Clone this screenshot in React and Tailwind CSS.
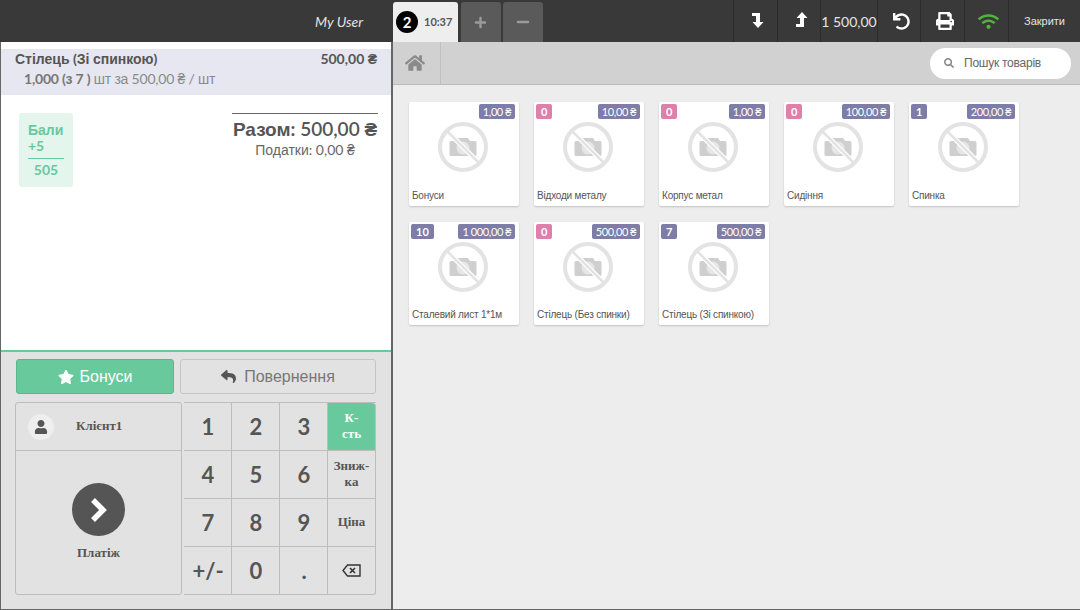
import { FaHome, FaUndo, FaPrint, FaWifi, FaStar, FaReply, FaUser, FaSearch, FaPlus, FaMinus } from "react-icons/fa";

const products = [
  { name: "Бонуси", price: "1,00 ₴" },
  { name: "Відходи металу", price: "10,00 ₴", qty: "0" },
  { name: "Корпус метал", price: "1,00 ₴", qty: "0" },
  { name: "Сидіння", price: "100,00 ₴", qty: "0" },
  { name: "Спинка", price: "200,00 ₴", qty: "1" },
  { name: "Сталевий лист 1*1м", price: "1 000,00 ₴", qty: "10" },
  { name: "Стілець (Без спинки)", price: "500,00 ₴", qty: "0" },
  { name: "Стілець (Зі спинкою)", price: "500,00 ₴", qty: "7" },
];

const keys = ["1", "2", "3", "К-\nсть", "4", "5", "6", "Зниж-\nка", "7", "8", "9", "Ціна", "+/-", "0", ".", "back"];

// Lato carries the digits and latin, cyrillic and the hryvnia sign come out in Arial metrics
function T({ children }) {
  return children.split(/([А-Яа-яЄєІіЇїҐґ₴]+)/).map((part, i) =>
    i % 2 ? <span key={i} className="font-['Liberation_Sans',sans-serif]">{part}</span> : part
  );
}

function NoPhoto() {
  return (
    <svg width="54" height="54" viewBox="0 0 54 54" className="block">
      <path d="M15 21h5l2-3h10l2 3h5a1.500 1.500 0 0 1 1.500 1.500v12a1.500 1.500 0 0 1-1.500 1.500H15a1.500 1.500 0 0 1-1.500-1.500v-12A1.500 1.500 0 0 1 15 21z" fill="#cfcfcf" />
      <circle cx="27" cy="28" r="6.500" fill="#e6e6e6" />
      <line x1="12" y1="12" x2="42" y2="42" stroke="#ffffff" strokeWidth="5" />
      <line x1="10" y1="10" x2="44" y2="44" stroke="#e3e3e3" strokeWidth="2.500" />
      <circle cx="27" cy="27" r="23" fill="none" stroke="#e3e3e3" strokeWidth="4" />
    </svg>
  );
}

function BackspaceIcon() {
  return (
    <svg width="19" height="13" viewBox="0 0 19 13" fill="none" stroke="#333" strokeWidth="1.4">
      <path d="M5.500 1H18v11H5.500L1 6.500z" />
      <path d="M8 4l5 5M13 4l-5 5" strokeWidth="1.600" />
    </svg>
  );
}

function LevelDown() {
  return (
    <svg width="12" height="15" viewBox="0 0 12 15" fill="currentColor">
      <path d="M0 0h8v9h3.500L6 15 .5 9H4V3H0z" />
    </svg>
  );
}

function LevelUp() {
  return (
    <svg width="12" height="15" viewBox="0 0 12 15" fill="currentColor">
      <path d="M0 15h8V6h3.500L6 0 .5 6H4v6H0z" />
    </svg>
  );
}

function PayChevron() {
  return (
    <svg width="18" height="26" viewBox="0 0 18 26" fill="none" stroke="currentColor" strokeWidth="5.500">
      <polyline points="3,3 13,13 3,23" />
    </svg>
  );
}

function ProductCard({ product, tall }) {
  const qtyColor = product.qty === "0" ? "bg-[#de7fac]" : "bg-[#7d7da8]";
  return (
    <div className={`relative w-[110px] ${tall ? "h-[104px]" : "h-[103px]"} bg-white shadow-[0_1px_2px_rgba(0,0,0,0.18)] rounded-[2px]`}>
      {product.qty && (
        <span className={`absolute left-[2px] top-[2px] h-[15px] min-w-[15px] px-[5px] rounded-[2px] text-[11px] leading-[15px] font-bold text-white text-center ${qtyColor}`}>
          {product.qty}
        </span>
      )}
      <span className="absolute right-[4px] top-[2px] h-[15px] px-[4px] rounded-[2px] bg-[#7d7da8] text-[11px] tracking-[-0.4px] leading-[15px] text-white whitespace-nowrap">
        <T>{product.price}</T>
      </span>
      <div className="flex justify-center pt-[18px] pr-[2px]">
        <NoPhoto />
      </div>
      <div className="absolute left-[3px] bottom-[3px] text-[10px] tracking-[-0.2px] leading-[14px] text-[#555] whitespace-nowrap font-['Liberation_Sans',sans-serif]">
        {product.name}
      </div>
    </div>
  );
}

function Key({ k, i }) {
  const isLast = i % 4 === 3;
  const active = i === 3;
  const base = `border-r border-b border-[#bdbdbd] flex items-center justify-center ${i === 15 ? "rounded-br-[3px]" : ""}`;
  if (k === "back") {
    return (
      <div className={`${base} bg-[#e2e2e2]`}>
        <BackspaceIcon />
      </div>
    );
  }
  if (isLast) {
    return (
      <div className={`${base} pb-[2px] text-center whitespace-pre-line font-['Liberation_Serif',serif] font-bold text-[13px] leading-[16px] ${active ? "bg-[#68c99c] text-white rounded-tr-[4px]" : "bg-[#e2e2e2] text-[#555]"}`}>
        {k}
      </div>
    );
  }
  return (
    <div className={`${base} pl-[1px] bg-[#e2e2e2] text-[#555] text-[22px] font-bold`}>
      {k}
    </div>
  );
}

export default function App() {
  return (
    <div className="w-[1080px] h-[610px] overflow-hidden flex flex-col font-['Lato',sans-serif] text-[#555] bg-[#666]">
      {/* Top bar */}
      <header className="h-[42px] bg-[#393939] flex shrink-0">
        <div className="w-[393px] flex items-center justify-end pr-[30px] text-[14px] italic text-[#e4e4e4]">My User</div>
        <div className="flex items-end gap-[3px] pt-[2px]">
          <div className="w-[65px] h-[40px] bg-[#eeeeee] rounded-t-[3px] flex items-center pl-[3px] gap-[6px]">
            <span className="w-[22px] h-[22px] rounded-full bg-black text-white text-[15px] font-bold flex items-center justify-center">2</span>
            <span className="text-[11px] font-bold text-[#555]">10:37</span>
          </div>
          <div className="w-[40px] h-[40px] bg-[#5a5a5a] rounded-t-[3px] flex items-center justify-center pr-[2px] text-[#9a9a9a] text-[13px]"><FaPlus /></div>
          <div className="w-[40px] h-[40px] bg-[#5a5a5a] rounded-t-[3px] flex items-center justify-center pr-[1px] text-[#9a9a9a] text-[14px] ml-[-1px]"><FaMinus /></div>
        </div>
        <div className="ml-auto flex h-[42px] text-white">
          <div className="w-[44px] border-l border-[#2b2b2b] flex items-center justify-center pl-[4px] pb-[1px]"><LevelDown /></div>
          <div className="w-[43px] border-l border-[#2b2b2b] flex items-center justify-center pl-[5px] pb-[3px]"><LevelUp /></div>
          <div className="w-[57px] border-l border-[#2b2b2b] flex items-center justify-center text-[14px] text-[#e4e4e4] whitespace-nowrap">1 500,00</div>
          <div className="w-[43px] border-l border-[#2b2b2b] flex items-center justify-center pl-[4px] text-[17px]"><FaUndo /></div>
          <div className="w-[44px] border-l border-[#2b2b2b] flex items-center justify-center pl-[5px] text-[18px]"><FaPrint /></div>
          <div className="w-[44px] border-l border-[#2b2b2b] flex items-center justify-center pl-[3px] text-[21px] text-[#4fb33f]"><FaWifi /></div>
          <div className="w-[72px] border-l border-[#2b2b2b] flex items-center justify-center text-[11px] text-[#e4e4e4] font-['Liberation_Sans',sans-serif]">Закрити</div>
        </div>
      </header>

      <div className="flex-1 flex min-h-0">
        {/* Left panel */}
        <aside className="w-[391px] border-l border-[#666] flex flex-col shrink-0">
          <div className="h-[310px] bg-white border-b-2 border-[#68c99c] pt-[7px]">
            <div className="h-[46px] bg-[#e6e7f0] px-[14px]">
              <div className="flex justify-between text-[14px] font-bold leading-[19px] text-[#555]">
                <span><T>Стілець (Зі спинкою)</T></span>
                <span><T>500,00 ₴</T></span>
              </div>
              <div className="pl-[9px] text-[14px] tracking-[-0.2px] leading-[19px] text-[#8a8a8a]">
                <span className="font-bold text-[#777]"><T>1,000 (з 7 )</T></span> <T>шт за 500,00 ₴ / шт</T>
              </div>
            </div>
            <div className="flex justify-between pl-[18px] pr-[13px] pt-[18px]">
              <div className="w-[54px] h-[74px] bg-[#e4f5ee] rounded-[3px] px-[9px] pt-[9px] text-[14px] leading-[16px] font-bold text-[#68c99c]">
                <div><T>Бали</T></div>
                <div>+5</div>
                <div className="border-t border-[#68c99c] mt-[4px] pt-[3px] text-center">505</div>
              </div>
              <div className="w-[146px] border-t border-[#666] text-center">
                <div className="text-[19px] leading-[26px] mt-[2px] text-[#555] whitespace-nowrap font-semibold"><span className="font-bold"><T>Разом:</T></span> <T>500,00 ₴</T></div>
                <div className="text-[14px] leading-[14px] text-[#666]"><T>Податки: 0,00 ₴</T></div>
              </div>
            </div>
          </div>

          <div className="flex-1 bg-[#e2e2e2] pl-[14px] pt-[7px]">
            <div className="flex gap-[6px] pl-[1px] font-['Liberation_Sans',sans-serif]">
              <div className="w-[158px] h-[35px] bg-[#68c99c] border border-[#5bb88d] rounded-[3px] flex items-center justify-center gap-[6px] text-white text-[16px]">
                <FaStar className="text-[16px]" /> Бонуси
              </div>
              <div className="w-[196px] h-[35px] border border-[#c4c4c4] rounded-[3px] flex items-center justify-center gap-[8px] text-[#777] text-[16px]">
                <FaReply className="text-[15px] text-[#555]" /> Повернення
              </div>
            </div>
            <div className="flex mt-[8px]">
              <div className="w-[167px] h-[193px] border border-[#bdbdbd] rounded-[3px] flex flex-col">
                <div className="h-[48px] border-b border-[#bdbdbd] flex items-center pl-[12px]">
                  <span className="w-[26px] h-[26px] rounded-full bg-[#eeeeee] flex items-center justify-center text-[14px] text-[#555]"><FaUser /></span>
                  <span className="ml-[22px] pb-[2px] font-['Liberation_Serif',serif] font-bold text-[13px] text-[#555]">Клієнт1</span>
                </div>
                <div className="flex-1 flex flex-col items-center pt-[32px]">
                  <span className="w-[53px] h-[53px] rounded-full bg-[#555] flex items-center justify-center text-white"><PayChevron /></span>
                  <span className="mt-[7px] font-['Liberation_Serif',serif] font-bold text-[13px] text-[#555]">Платіж</span>
                </div>
              </div>
              <div className="ml-[2px] grid grid-cols-[repeat(4,48px)] grid-rows-[repeat(4,48px)] border-t border-[#bdbdbd] self-start">
                {keys.map((k, i) => <Key key={k} k={k} i={i} />)}
              </div>
            </div>
          </div>
        </aside>

        {/* Right panel */}
        <main className="flex-1 border-l-2 border-[#666] flex flex-col bg-[#eeeded] min-w-0">
          <div className="h-[43px] bg-[#d1d1d1] border-b border-[#bbbbbb] flex items-center shrink-0 pr-[9px]">
            <div className="w-[48px] h-full border-r border-[#c0c0c0] flex items-center justify-center pr-[3px] text-[#8a8a8a] text-[20px]"><FaHome /></div>
            <div className="ml-auto w-[141px] h-[31px] bg-white rounded-full flex items-center pl-[14px] gap-[10px] text-[12px] tracking-[-0.25px] text-[#666] font-['Liberation_Sans',sans-serif]">
              <FaSearch className="text-[10px] text-[#888]" />
              <span>Пошук товарів</span>
            </div>
          </div>
          <div className="flex-1 grid grid-cols-[repeat(5,110px)] auto-rows-min gap-x-[15px] gap-y-[16px] pl-[16px] pt-[17px]">
            {products.map((p, i) => <ProductCard key={p.name} product={p} tall={i < 5} />)}
          </div>
        </main>
      </div>
      <div className="h-[1px] bg-[#666] shrink-0" />
    </div>
  );
}
